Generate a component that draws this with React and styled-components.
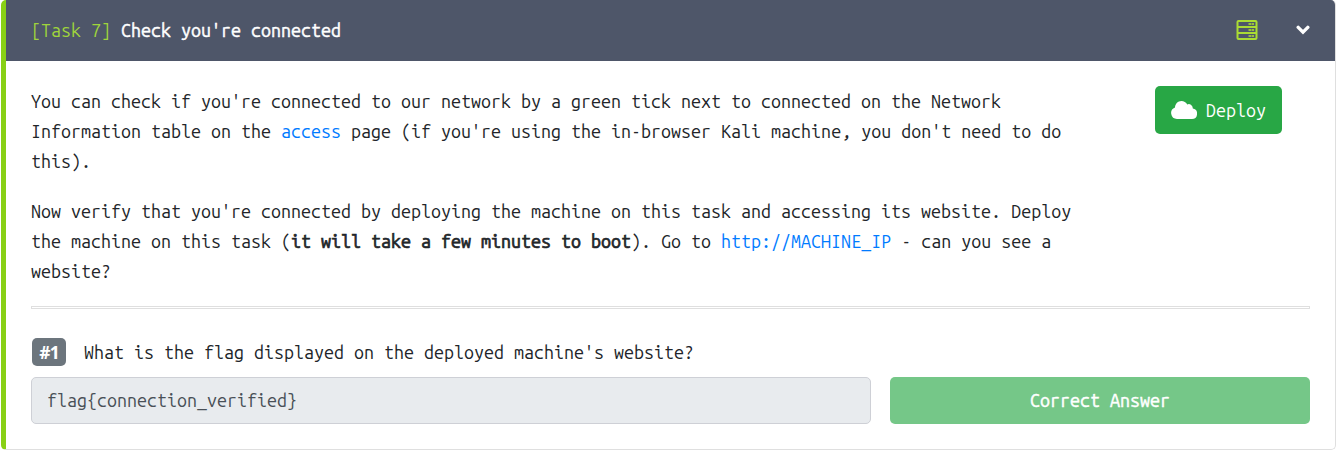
import React from 'react';
import styled, { createGlobalStyle } from 'styled-components';

const Global = createGlobalStyle`
  * { box-sizing: border-box; }
  body {
    margin: 0;
    background: #fff;
    color: #212529;
    font-family: "Ubuntu Mono", "DejaVu Sans Mono", monospace;
    font-size: 17.86px;
    line-height: 30px;
  }
`;

const Card = styled.section`
  width: 1335px;
  height: 450px;
  margin-left: 1px;
  border: 1px solid #dfdfdf;
  border-top: 0;
  border-left: 5px solid #88d015;
  border-radius: 5px;
  overflow: hidden;
`;

const Header = styled.header`
  display: flex;
  align-items: center;
  height: 61px;
  padding: 0 25px;
  background: #4e5669;
`;

const Title = styled.h1`
  flex: 1;
  margin: 0;
  padding-bottom: 2px;
  font-size: inherit;
  font-weight: 400;
  color: #fff;
  -webkit-text-stroke: 0.45px #fff;
`;

const TaskNumber = styled.span`
  color: #9fd43c;
  -webkit-text-stroke: 0;
`;

const ServerIcon = styled.svg`
  width: 22px;
  height: 20px;
  margin: 0 38px 2px 0;
`;

const ChevronIcon = styled.svg`
  width: 14px;
  height: 10px;
  margin-bottom: 2px;
`;

const Body = styled.div`
  padding: 25px 25px 0;
`;

const Intro = styled.div`
  display: flex;
  justify-content: space-between;
  align-items: flex-start;
  padding-right: 28px;
`;

const Description = styled.div`
  width: 1060px;
  padding-bottom: 1px;
`;

const Paragraph = styled.p`
  margin: 0 0 20px;
  white-space: nowrap;
`;

const Link = styled.a`
  color: #007bff;
  text-decoration: none;
`;

const Emphasis = styled.strong`
  font-weight: 400;
  -webkit-text-stroke: 0.7px #212529;
`;

const DeployButton = styled.button`
  display: flex;
  align-items: center;
  gap: 9px;
  width: 127px;
  height: 48px;
  padding: 0 0 0 16px;
  border: 0;
  border-radius: 5px;
  background: #28a745;
  color: #fff;
  font: inherit;
`;

const CloudIcon = styled.svg`
  width: 26px;
  height: 18px;
  margin-bottom: 1px;
`;

const Divider = styled.hr`
  height: 3px;
  margin: -1px 0 29px;
  border: 1px solid #dfdfdf;
`;

const Question = styled.div`
  display: flex;
  align-items: center;
  gap: 18px;
  height: 28px;
  padding-left: 1px;
  margin-bottom: 11px;
`;

const Badge = styled.span`
  width: 34px;
  height: 28px;
  border-radius: 5px;
  background: #6c757d;
  color: #fff;
  font: 700 17.5px/28px "Noto Sans", sans-serif;
  letter-spacing: -0.8px;
  text-align: center;
`;

const AnswerRow = styled.div`
  display: grid;
  grid-template-columns: 840px 420px;
  justify-content: space-between;
`;

const AnswerField = styled.div`
  height: 47px;
  padding: 0 15px;
  border: 1px solid #ced0d6;
  border-radius: 5px;
  background: #e8ebee;
  color: #495057;
  line-height: 44px;
`;

const ResultButton = styled.button`
  height: 47px;
  padding: 0 0 1px;
  border: 0;
  border-radius: 5px;
  background: #75c788;
  color: #fff;
  font: inherit;
  -webkit-text-stroke: 0.45px #fff;
`;

export default function App() {
  return (
    <>
      <Global />
      <Card>
        <Header>
          <Title><TaskNumber>[Task 7]</TaskNumber> Check you're connected</Title>
          <ServerIcon viewBox="0 0 22 20" fill="none" stroke="#aadb33" strokeWidth="2">
            <rect x="1.5" y="1" width="19" height="18" rx="1" />
            <path d="M1 7h20M1 13h20" />
            <path d="M12.500 4h2.500M15.500 4h2.500M12.500 10h2.500M15.500 10h2.500M12.500 16h2.500M15.500 16h2.500" opacity="0.8" />
          </ServerIcon>
          <ChevronIcon viewBox="0 0 14 10" fill="none" stroke="#fff" strokeWidth="3.4" strokeLinecap="round" strokeLinejoin="miter">
            <path d="M2.2 2.4 7 7.1l4.8-4.7" />
          </ChevronIcon>
        </Header>
        <Body>
          <Intro>
            <Description>
              <Paragraph>
                You can check if you're connected to our network by a green tick next to connected on the Network<br />
                Information table on the <Link>access</Link> page (if you're using the in-browser Kali machine, you don't need to do<br />
                this).
              </Paragraph>
              <Paragraph>
                Now verify that you're connected by deploying the machine on this task and accessing its website. Deploy<br />
                the machine on this task (<Emphasis>it will take a few minutes to boot</Emphasis>). Go to <Link>http://MACHINE_IP</Link> - can you see a<br />
                website?
              </Paragraph>
            </Description>
            <DeployButton>
              <CloudIcon viewBox="0 0 26 18" fill="#fff">
                <path d="M6 18a6 6 0 0 1-2-11.6C4.2 2.8 7 0 10.400 0c2.500 0 4.700 1.300 5.900 3.400a4.100 4.100 0 0 1 5.500 4.100A5.300 5.300 0 0 1 20.700 18z" />
              </CloudIcon>
              Deploy
            </DeployButton>
          </Intro>
          <Divider />
          <Question>
            <Badge>#1</Badge>
            <span>What is the flag displayed on the deployed machine's website?</span>
          </Question>
          <AnswerRow>
            <AnswerField>flag{'{'}connection_verified{'}'}</AnswerField>
            <ResultButton>Correct Answer</ResultButton>
          </AnswerRow>
        </Body>
      </Card>
    </>
  );
}
